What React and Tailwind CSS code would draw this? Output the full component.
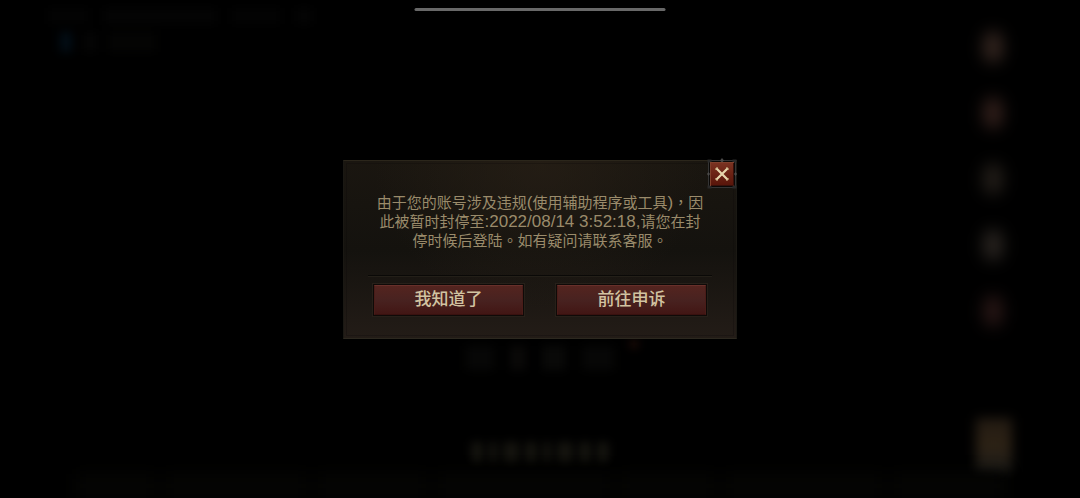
import React, { useState } from 'react';

const sideIcons = [
  'bg-[#32241e]',
  'bg-[#301e1a]',
  'bg-[#221d18]',
  'bg-[#28231f]',
  'bg-[#261514]',
];

const titleGlyphs = ['w-3', 'w-2', 'w-4', 'w-3', 'w-2', 'w-4', 'w-3', 'w-3'];

const footerBlocks = ['w-20', 'w-36', 'w-28', 'w-44', 'w-24', 'w-40', 'w-28'];

function Backdrop() {
  return (
    <div aria-hidden="true" className="absolute inset-0 overflow-hidden">
      <div className="absolute top-2 left-12 flex flex-col gap-2 blur-[5px]">
        <div className="flex gap-4">
          <span className="w-10 h-4 bg-[#030303]" />
          <span className="w-28 h-4 bg-[#040404]" />
          <span className="w-12 h-4 bg-[#030303]" />
          <span className="w-4 h-4 bg-[#040404]" />
        </div>
        <div className="flex items-center gap-3 pl-3">
          <span className="w-3 h-5 bg-[#020d16]" />
          <span className="w-3 h-5 bg-[#050505]" />
          <span className="w-12 h-5 bg-[#040403]" />
        </div>
      </div>

      <div className="absolute top-[31px] right-[77px] flex flex-col gap-[34px]">
        {sideIcons.map((color, i) => (
          <span key={i} className={`w-5 h-8 rounded-full blur-[8px] ${color}`} />
        ))}
      </div>
      <div className="absolute bottom-[26px] right-[68px] w-9 h-[54px] bg-linear-to-b from-[#221a12] via-[#2d2215] to-[#1b1a17] blur-[6px]" />

      <div className="absolute inset-x-0 top-[346px] flex justify-center gap-4 blur-[5px]">
        <span className="w-7 h-6 bg-[#070706]" />
        <span className="w-4 h-6 bg-[#0a0908]" />
        <span className="w-6 h-6 bg-[#090908]" />
        <span className="w-8 h-6 bg-[#070706]" />
      </div>
      <span className="absolute top-[340px] left-[630px] w-2 h-2 bg-[#200c07] blur-[4px]" />

      <div className="absolute inset-x-0 bottom-9 flex justify-center gap-1.5 blur-[4px]">
        {titleGlyphs.map((width, i) => (
          <span key={i} className={`h-5 bg-[#14130e] ${width}`} />
        ))}
      </div>
      <div className="absolute inset-x-0 bottom-0 flex justify-center gap-2 blur-[8px]">
        {footerBlocks.map((width, i) => (
          <span key={i} className={`h-6 bg-[#050503] ${width}`} />
        ))}
      </div>
    </div>
  );
}

// full-width punctuation sits in the middle of its box
function Mark({ children }) {
  return <span className="leading-none font-['Noto_Sans_CJK_TC',sans-serif]" lang="zh-Hant">{children}</span>;
}

function DialogButton({ children, onClick }) {
  return (
    <button
      type="button"
      onClick={onClick}
      className="flex-1 h-[34px] p-px border border-[#272019] bg-[#0f0a08] cursor-pointer"
    >
      <span className="flex items-center justify-center h-full border border-[#4a1c18] border-t-[#68302a] border-b-[#38110f] bg-linear-to-b from-[#54241f] via-[#482220] to-[#421614] text-[17px] leading-5 font-medium text-[#d2c3a1] hover:text-[#f1e2bd]">
        {children}
      </span>
    </button>
  );
}

function CloseButton({ onClick }) {
  return (
    <button
      type="button"
      aria-label="关闭"
      onClick={onClick}
      className="absolute -top-1 -right-0.5 w-8 h-8 cursor-pointer"
    >
      <svg viewBox="0 0 32 32" className="w-8 h-8">
        <defs>
          <linearGradient id="closeFill" x1="0" y1="0" x2="0" y2="1">
            <stop offset="0" stopColor="#7a3322" />
            <stop offset="0.5" stopColor="#6b2214" />
            <stop offset="1" stopColor="#57150a" />
          </linearGradient>
        </defs>
        <rect x="2.5" y="3.5" width="27" height="27" fill="#0b0908" stroke="#343434" />
        <path d="M16 1l2 2.5-2 2-2-2zM1 17l1.5-2L4 17l-1.5 2zM28 17l1.5-2 1.5 2-1.5 2z" fill="#4b4a49" />
        <path d="M1.5 2.5h4v3h-4zM26.5 2.5h4v3h-4zM1.5 28.5h4v3h-4zM26.5 28.5h4v3h-4z" fill="#292929" />
        <rect x="4.5" y="5.5" width="23" height="23" fill="url(#closeFill)" stroke="#81402c" />
        <path d="M5 28.5h22.5V6" fill="none" stroke="#38100a" />
        <path d="M11 12l10 10M21 12L11 22" stroke="#e6d5ad" strokeWidth="2.2" strokeLinecap="square" />
        <path d="M9.5 12.5l2-2M20.5 10.5l2 2M9.5 21.5l2 2M20.5 23.5l2-2" stroke="#d2ba8e" strokeWidth="1.3" />
      </svg>
    </button>
  );
}

export default function App() {
  const [open, setOpen] = useState(true);
  const close = () => setOpen(false);

  return (
    <main className="relative flex items-center justify-center min-h-screen overflow-hidden bg-black font-['Liberation_Sans','Noto_Sans_CJK_SC',sans-serif]">
      <Backdrop />
      <div className="absolute top-2 left-1/2 -translate-x-1/2 w-[251px] h-[3px] rounded-full bg-[#686868]" />

      {open && (
        <section
          role="dialog"
          aria-modal="true"
          aria-describedby="ban-message"
          className="relative w-full max-w-[394px] px-7 pt-8 pb-[21px] border border-[#1a1813] border-t-[#2b261b] border-b-[#2c281f] bg-linear-to-b from-[#1a1610] via-[#14120e] to-[#231c17]"
        >
          <div aria-hidden="true" className="absolute inset-0 bg-radial-[at_50%_0%] from-[#2a2117]/60 to-transparent to-60%" />
          <div aria-hidden="true" className="absolute inset-[2px] border border-[#0d0b09]/30" />
          <CloseButton onClick={close} />

          <p id="ban-message" className="relative text-center text-[15px] leading-[19px] text-[#9a8b6b]">
            由于您的账号涉及违规<span className="text-[17px]">(</span>使用辅助程序或工具<span className="text-[17px]">)</span><Mark>，</Mark>因
            <br />
            此被暂时封停至<span className="text-[17px]">:2022/08/14 3:52:18,</span>请您在封
            <br />
            停时候后登陆<Mark>。</Mark>如有疑问请联系客服<Mark>。</Mark>
          </p>

          <hr className="relative mt-[25px] -mx-1 border-t-[#0a0907] shadow-[0_1px_0_#231f18]" />

          <div className="relative mt-[7px] flex gap-[30px]">
            <DialogButton onClick={close}>我知道了</DialogButton>
            <DialogButton onClick={close}>前往申诉</DialogButton>
          </div>
        </section>
      )}
    </main>
  );
}
